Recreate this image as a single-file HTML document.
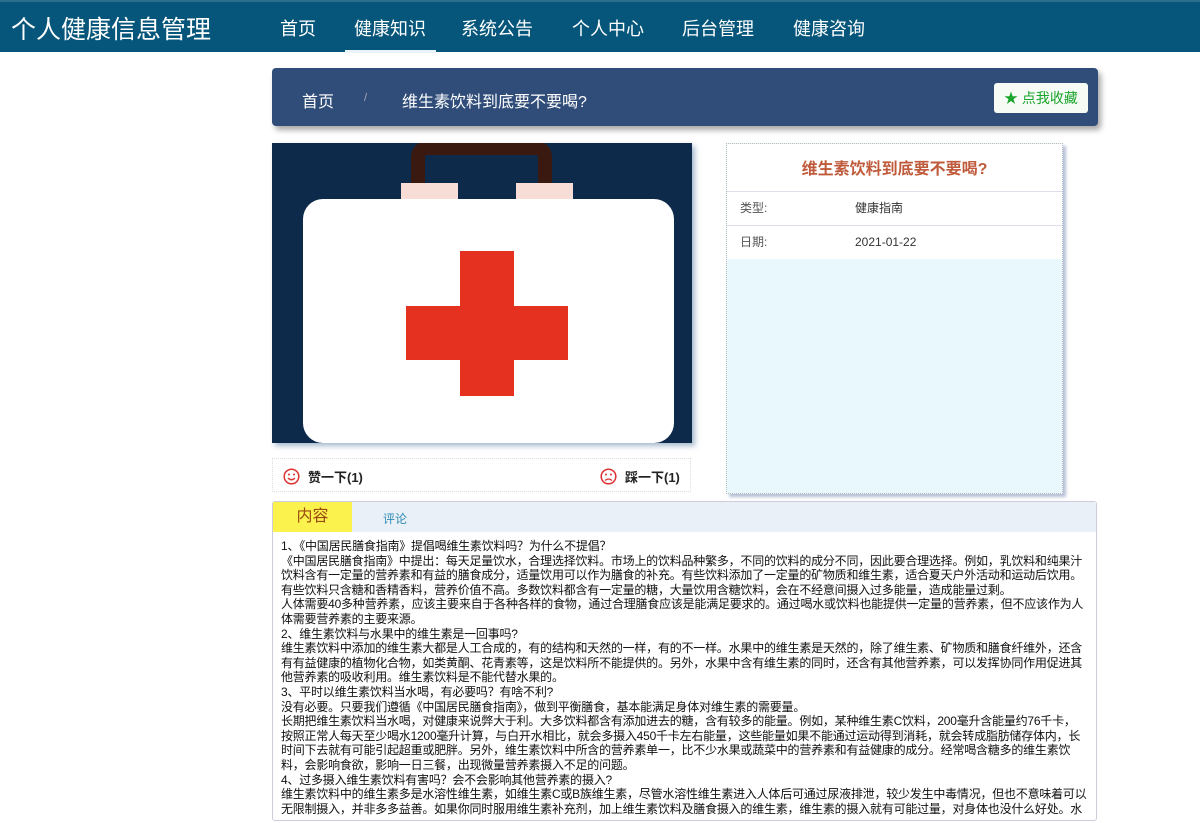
<!DOCTYPE html>
<html><head><meta charset="utf-8"><style>
*{margin:0;padding:0;box-sizing:border-box}
body{width:1200px;height:800px;overflow:hidden;background:#fff;font-family:"Liberation Sans","Noto Sans CJK SC",sans-serif;position:relative}
.nav{position:absolute;left:0;top:0;width:1200px;height:52px;background:#05567a;border-top:2px solid #2a6d8c}
.logo{position:absolute;left:11px;top:8px;color:#fff;font-size:25px}
.nav a{position:absolute;top:13px;color:#fff;font-size:18px;text-decoration:none}
.act{position:absolute;left:345px;top:50px;width:91px;height:3px;background:#eaf4f8}
.crumb{position:absolute;left:272px;top:68px;width:826px;height:58px;background:#304d7a;border-radius:4px;box-shadow:3px 4px 6px rgba(0,0,0,.35);color:#fff}
.crumb .a{position:absolute;left:30px;top:20px;font-size:16px}
.crumb .s{position:absolute;left:92px;top:24px;font-size:11px;color:#aab}
.crumb .t{position:absolute;left:130px;top:20px;font-size:16px}
.fav{position:absolute;left:722px;top:15px;width:94px;height:30px;background:#f6fbf6;border-radius:3px;color:#1aa52a;font-size:14px;line-height:30px;text-align:center}
.img{position:absolute;left:272px;top:143px;width:420px;height:300px;background:#0d2a4b;overflow:hidden;box-shadow:3px 3px 5px rgba(80,120,160,.5)}
.info{position:absolute;left:726px;top:143px;width:337px;height:351px;border:1px dotted #bbb;background:#e8f8fd;box-shadow:3px 3px 3px #b8c0d8}
.info .h{background:#fff;height:47px;text-align:center;color:#bf5a3b;font-weight:bold;font-size:16px;line-height:52px}
.row{background:#fff;height:34px;border-top:1px solid #dde;font-size:12px;color:#555;line-height:32px;position:relative}
.row span{position:absolute;left:128px;color:#333}
.row b{font-weight:normal;position:absolute;left:13px}
.like{position:absolute;left:272px;top:458px;width:419px;height:34px;border:1px dotted #ddd;font-size:13px;font-weight:bold;color:#222}
.like div{position:absolute;top:8px}
.like svg{vertical-align:-3px;margin-right:8px}
.tabs{position:absolute;left:272px;top:501px;width:825px;height:320px;border:1px solid #ccd;border-radius:3px}
.tb{height:30px;background:#e9f0f7;position:relative}
.t1{position:absolute;left:0;top:0;width:79px;height:30px;background:#fbf24d;color:#9b4a10;font-size:16px;text-align:center;line-height:30px}
.t2{position:absolute;left:110px;top:8px;color:#2f8ab5;font-size:12px}
.txt{padding:7px 6px 7px 8px;font-size:12px;line-height:14.6px;color:#111;letter-spacing:-0.22px}
</style></head><body>
<div class="nav"><div class="logo">个人健康信息管理</div>
<a style="left:280px">首页</a><a style="left:354px">健康知识</a><a style="left:461px">系统公告</a><a style="left:572px">个人中心</a><a style="left:682px">后台管理</a><a style="left:793px">健康咨询</a>
</div><div class="act"></div>
<div class="crumb"><span class="a">首页</span><span class="s">/</span><span class="t">维生素饮料到底要不要喝?</span><div class="fav">★ 点我收藏</div></div>
<div class="img"><svg width="420" height="300">
<path d="M146 45 V15 Q146 5 156 5 H263 Q273 5 273 15 V45" fill="none" stroke="#3a1a10" stroke-width="14"/>
<rect x="129" y="40" width="57" height="20" fill="#f8dcd6"/><rect x="244" y="40" width="57" height="20" fill="#f8dcd6"/>
<rect x="31" y="56" width="371" height="244" rx="20" fill="#fff"/>
<rect x="188" y="108" width="54" height="145" fill="#e5311f"/><rect x="134" y="163" width="162" height="54" fill="#e5311f"/>
</svg></div>
<div class="info"><div class="h">维生素饮料到底要不要喝?</div>
<div class="row"><b>类型:</b><span>健康指南</span></div>
<div class="row"><b>日期:</b><span>2021-01-22</span></div></div>
<div class="like"><div style="left:10px"><svg width="17" height="17" viewBox="0 0 17 17"><circle cx="8.5" cy="8.5" r="7.3" fill="none" stroke="#d33" stroke-width="1.5"/><circle cx="6" cy="6.5" r="1" fill="#d33"/><circle cx="11" cy="6.5" r="1" fill="#d33"/><path d="M5 10 Q8.5 13.5 12 10" fill="none" stroke="#d33" stroke-width="1.3"/></svg>赞一下(1)</div><div style="left:327px"><svg width="17" height="17" viewBox="0 0 17 17"><circle cx="8.5" cy="8.5" r="7.3" fill="none" stroke="#d33" stroke-width="1.5"/><circle cx="6" cy="6.5" r="1" fill="#d33"/><circle cx="11" cy="6.5" r="1" fill="#d33"/><path d="M5 12.5 Q8.5 9.5 12 12.5" fill="none" stroke="#d33" stroke-width="1.3"/></svg>踩一下(1)</div></div>
<div class="tabs"><div class="tb"><div class="t1">内容</div><div class="t2">评论</div></div>
<div class="txt">1、《中国居民膳食指南》提倡喝维生素饮料吗？为什么不提倡？<br>《中国居民膳食指南》中提出：每天足量饮水，合理选择饮料。市场上的饮料品种繁多，不同的饮料的成分不同，因此要合理选择。例如，乳饮料和纯果汁饮料含有一定量的营养素和有益的膳食成分，适量饮用可以作为膳食的补充。有些饮料添加了一定量的矿物质和维生素，适合夏天户外活动和运动后饮用。有些饮料只含糖和香精香料，营养价值不高。多数饮料都含有一定量的糖，大量饮用含糖饮料，会在不经意间摄入过多能量，造成能量过剩。<br>人体需要40多种营养素，应该主要来自于各种各样的食物，通过合理膳食应该是能满足要求的。通过喝水或饮料也能提供一定量的营养素，但不应该作为人体需要营养素的主要来源。<br>2、维生素饮料与水果中的维生素是一回事吗?<br>维生素饮料中添加的维生素大都是人工合成的，有的结构和天然的一样，有的不一样。水果中的维生素是天然的，除了维生素、矿物质和膳食纤维外，还含有有益健康的植物化合物，如类黄酮、花青素等，这是饮料所不能提供的。另外，水果中含有维生素的同时，还含有其他营养素，可以发挥协同作用促进其他营养素的吸收利用。维生素饮料是不能代替水果的。<br>3、平时以维生素饮料当水喝，有必要吗？有啥不利?<br>没有必要。只要我们遵循《中国居民膳食指南》，做到平衡膳食，基本能满足身体对维生素的需要量。<br>长期把维生素饮料当水喝，对健康来说弊大于利。大多饮料都含有添加进去的糖，含有较多的能量。例如，某种维生素C饮料，200毫升含能量约76千卡，<br>按照正常人每天至少喝水1200毫升计算，与白开水相比，就会多摄入450千卡左右能量，这些能量如果不能通过运动得到消耗，就会转成脂肪储存体内，长时间下去就有可能引起超重或肥胖。另外，维生素饮料中所含的营养素单一，比不少水果或蔬菜中的营养素和有益健康的成分。经常喝含糖多的维生素饮料，会影响食欲，影响一日三餐，出现微量营养素摄入不足的问题。<br>4、过多摄入维生素饮料有害吗？会不会影响其他营养素的摄入?<br>维生素饮料中的维生素多是水溶性维生素，如维生素C或B族维生素，尽管水溶性维生素进入人体后可通过尿液排泄，较少发生中毒情况，但也不意味着可以无限制摄入，并非多多益善。如果你同时服用维生素补充剂，加上维生素饮料及膳食摄入的维生素，维生素的摄入就有可能过量，对身体也没什么好处。水</div></div>
</body></html>
